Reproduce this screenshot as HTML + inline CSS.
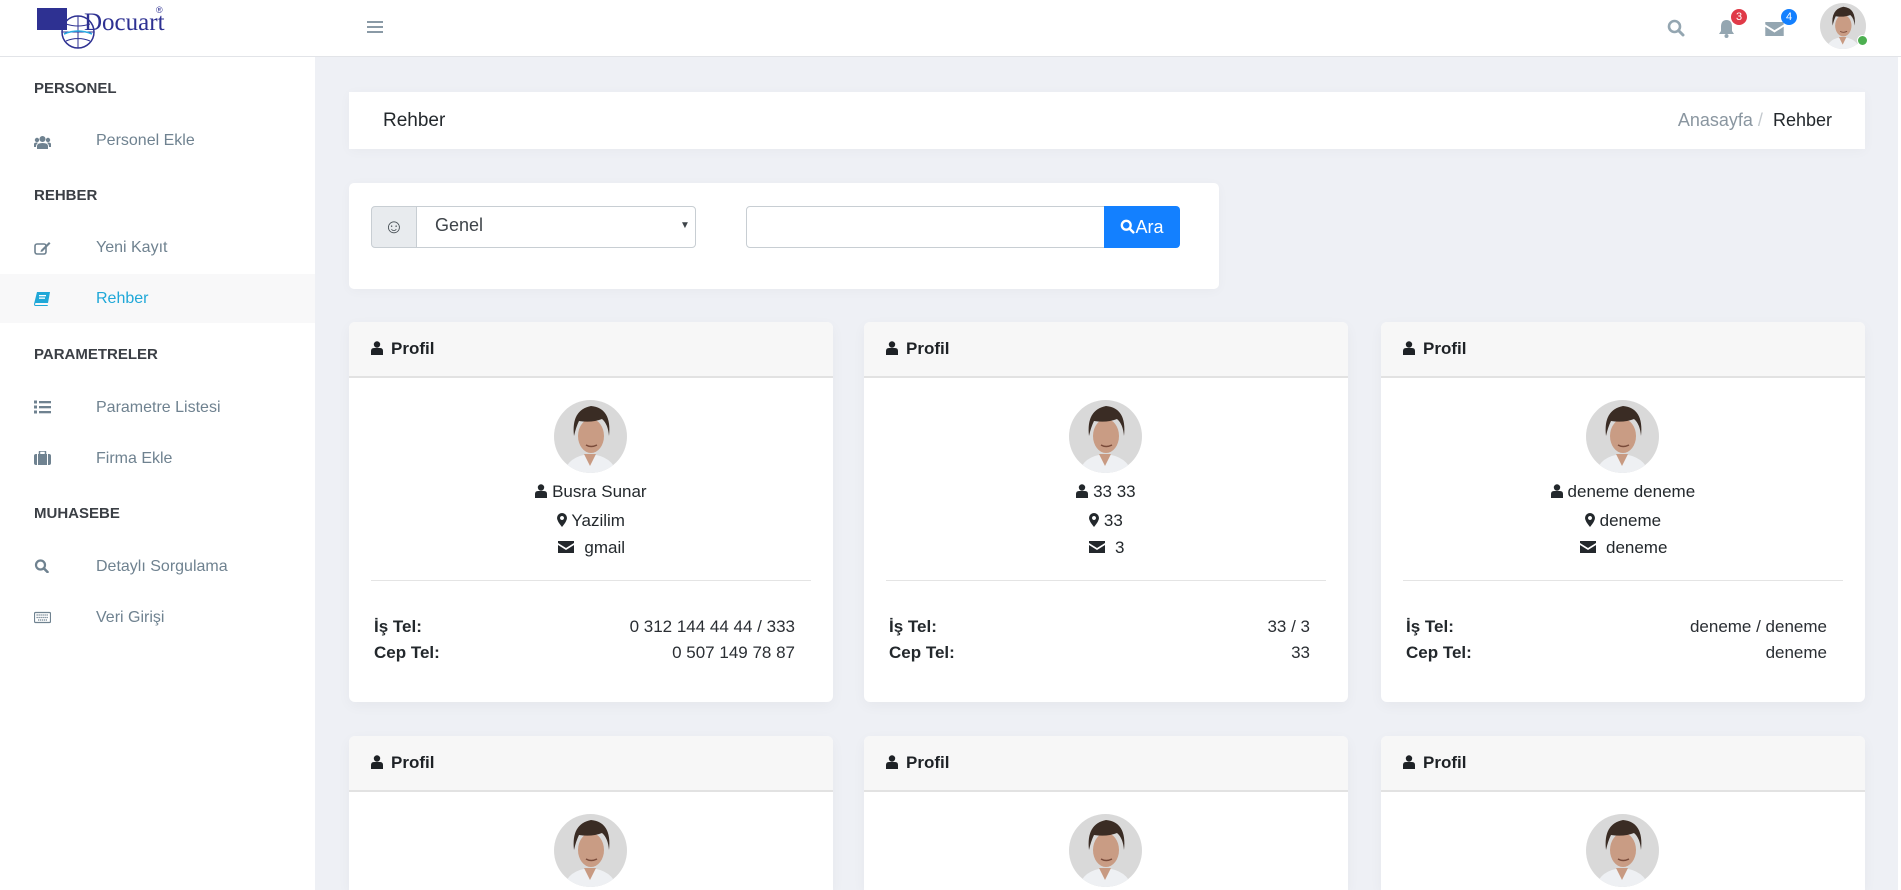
<!DOCTYPE html>
<html style="overflow:hidden;width:1901px;height:890px"><head><meta charset="utf-8">
<style>
*{box-sizing:border-box;margin:0;padding:0}
html,body{overflow:hidden}
body{width:1901px;height:890px;background:#eef0f5;font-family:"Liberation Sans",sans-serif;position:relative;color:#23282c}
.abs{position:absolute}
#hdr{left:0;top:0;width:1901px;height:57px;background:#fff;border-bottom:1px solid #e2e4e8}
#side{left:0;top:57px;width:315px;height:833px;background:#fff}
.sh{position:absolute;left:34px;font-weight:bold;font-size:15px;color:#3b3f45}
.si{position:absolute;left:96px;font-size:16px;color:#6f8290}
.ic{position:absolute;left:34px;width:17px;height:14px}
.box{position:absolute;background:#fff;border-radius:5px;box-shadow:0 2px 12px rgba(0,0,0,.03)}
.card{position:absolute;background:#fff;border-radius:6px 6px 0 0;overflow:hidden;width:484px;box-shadow:0 4px 14px rgba(0,0,0,.04)}
.r1{border-radius:6px}
.ch{height:56px;background:#f7f7f7;border-bottom:2px solid #e2e2e2;padding-left:22px;font-weight:bold;font-size:17px;line-height:54px;color:#1e2226}
.av{position:absolute;width:73px;height:73px;border-radius:50%;overflow:hidden;left:205px}
.ln{position:absolute;left:0;width:100%;text-align:center;font-size:17px;color:#23282c}
.dv{position:absolute;left:22px;right:22px;height:1px;background:#e4e4e4}
.tl{position:absolute;left:25px;font-weight:bold;font-size:17px}
.tv{position:absolute;right:38px;font-size:17px;color:#2a2e33}
</style></head><body>
<svg width="0" height="0" style="position:absolute"><defs>
<symbol id="face" viewBox="0 0 73 73">
<rect width="73" height="73" fill="#d9d9d9"/>
<path d="M10 73 Q14 56 36 54 Q58 56 63 73Z" fill="#eef0f3"/>
<path d="M30 54 L36 66 L42 54Z" fill="#c89a82"/>
<ellipse cx="37" cy="36" rx="13" ry="17" fill="#c99c84"/>
<path d="M20 36 Q17 10 37 6 Q58 8 55 36 Q54 24 48 19 Q38 23 25 21 Q22 27 20 36Z" fill="#3a2c24"/>
<path d="M32 45 Q37 48 43 45" stroke="#7a4b3a" stroke-width="1.5" fill="none"/>
</symbol>
<symbol id="user" viewBox="0 0 12 14"><circle cx="6" cy="3.5" r="3.2" fill="currentColor"/><path d="M0 14 V10 Q0 7 3 7 H9 Q12 7 12 10 V14Z" fill="currentColor"/></symbol>
<symbol id="pin" viewBox="0 0 10 14"><path d="M5 0 A5 5 0 0 1 10 5 Q10 8 5 14 Q0 8 0 5 A5 5 0 0 1 5 0Z M5 3 A2 2 0 1 0 5.01 3Z" fill="currentColor" fill-rule="evenodd"/></symbol>
<symbol id="mail" viewBox="0 0 16 12"><path d="M0 0 H16 V2 L8 7 L0 2Z M0 4 L8 9 L16 4 V12 H0Z" fill="currentColor"/></symbol>
</defs></svg>

<div id="hdr" class="abs">
  <div class="abs" style="left:37px;top:8px;width:30px;height:22px;background:#2e3192"></div>
  <svg class="abs" style="left:58px;top:14px" width="38" height="36" viewBox="0 0 38 36"><circle cx="20" cy="18" r="16" fill="none" stroke="#2e3192" stroke-width="1.5"/><path d="M4 18 H36 M20 2 V34 M8 10 Q20 14 32 10 M8 27 Q20 22 32 27" stroke="#2e3192" stroke-width="1" fill="none"/><path d="M6 20 Q20 14 34 20" stroke="#29abe2" stroke-width="1.5" fill="none"/></svg>
  <div class="abs" style="left:84px;top:9px;font-family:'Liberation Serif',serif;font-size:25px;color:#2e3192">Docuart</div>
  <div class="abs" style="left:156px;top:5px;font-size:9px;color:#2e3192">®</div>
  <div class="abs" style="left:367px;top:21px;width:16px;height:2px;background:#8a9aa6;box-shadow:0 5px 0 #8a9aa6,0 10px 0 #8a9aa6"></div>
  <svg class="abs" style="left:1667px;top:19px" width="18" height="18" viewBox="0 0 18 18"><circle cx="7.5" cy="7.5" r="5.5" fill="none" stroke="#94a6b1" stroke-width="2.6"/><path d="M11.5 11.5 L16 16" stroke="#94a6b1" stroke-width="3" stroke-linecap="round"/></svg>
  <svg class="abs" style="left:1718px;top:19px" width="17" height="19" viewBox="0 0 17 19"><path d="M8.5 1 Q3 1 3 8 V12 L1 15 H16 L14 12 V8 Q14 1 8.5 1Z" fill="#94a6b1"/><circle cx="8.5" cy="17" r="2" fill="#94a6b1"/></svg>
  <div class="abs" style="left:1731px;top:9px;width:16px;height:16px;border-radius:50%;background:#e03a48;color:#fff;font-size:11px;text-align:center;line-height:16px">3</div>
  <svg class="abs" style="left:1765px;top:22px" width="19" height="14" viewBox="0 0 16 12"><use href="#mail" style="color:#94a6b1"/></svg>
  <div class="abs" style="left:1781px;top:9px;width:16px;height:16px;border-radius:50%;background:#1380ff;color:#fff;font-size:11px;text-align:center;line-height:16px">4</div>
  <svg class="abs" style="left:1820px;top:3px;border-radius:50%" width="46" height="46"><use href="#face" width="46" height="46"/></svg>
  <div class="abs" style="left:1857px;top:35px;width:11px;height:11px;border-radius:50%;background:#4caf50;border:1.5px solid #fff"></div>
</div>

<div id="side" class="abs"></div>
<div class="abs" style="left:0;top:274px;width:315px;height:49px;background:#f8f8f9"></div>
<div class="sh" style="top:80px">PERSONEL</div>
<svg class="ic" style="top:135px" viewBox="0 0 17 14"><circle cx="8.5" cy="4" r="3" fill="#6f8290"/><circle cx="3" cy="5" r="2.2" fill="#6f8290"/><circle cx="14" cy="5" r="2.2" fill="#6f8290"/><path d="M3 14 V11 Q3 8 8.5 8 Q14 8 14 11 V14Z M0 12 V9 Q0 7.5 3 7.5 L4 8 Q2 9 2 12Z M17 12 V9 Q17 7.5 14 7.5 L13 8 Q15 9 15 12Z" fill="#6f8290"/></svg>
<div class="si" style="top:132px">Personel Ekle</div>
<div class="sh" style="top:187px">REHBER</div>
<svg class="ic" style="top:241px" viewBox="0 0 17 14"><rect x="1" y="3" width="11" height="10" rx="2" fill="none" stroke="#6f8290" stroke-width="1.6"/><path d="M7 9 L15 1 L16.5 2.5 L8.5 10.5 L6.5 11Z" fill="#6f8290"/></svg>
<div class="si" style="top:239px">Yeni Kayıt</div>
<svg class="ic" style="top:292px" viewBox="0 0 17 14"><path d="M3 0 H16 L14 11 H2 Q1 11 1 12.5 Q1 13 2 13 H14 L13.5 14 H1.5 Q0 14 0 12 Z" fill="#20a8d8"/><rect x="5" y="3" width="7" height="1.3" fill="#fff"/><rect x="5" y="5.5" width="6" height="1.3" fill="#fff"/></svg>
<div class="si" style="top:290px;color:#20a8d8">Rehber</div>
<div class="sh" style="top:346px">PARAMETRELER</div>
<svg class="ic" style="top:400px" viewBox="0 0 17 14"><rect x="5" y="1" width="12" height="2.3" fill="#6f8290"/><rect x="5" y="6" width="12" height="2.3" fill="#6f8290"/><rect x="5" y="11" width="12" height="2.3" fill="#6f8290"/><rect x="0" y="0.5" width="3" height="3" fill="#6f8290"/><rect x="0" y="5.5" width="3" height="3" fill="#6f8290"/><rect x="0" y="10.5" width="3" height="3" fill="#6f8290"/></svg>
<div class="si" style="top:399px">Parametre Listesi</div>
<svg class="ic" style="top:451px" viewBox="0 0 17 14"><rect x="0" y="3" width="17" height="11" rx="2" fill="#6f8290"/><rect x="5.5" y="0" width="6" height="4" rx="1" fill="none" stroke="#6f8290" stroke-width="1.5"/><rect x="3" y="3" width="1" height="11" fill="#fff"/><rect x="13" y="3" width="1" height="11" fill="#fff"/></svg>
<div class="si" style="top:450px">Firma Ekle</div>
<div class="sh" style="top:505px">MUHASEBE</div>
<svg class="ic" style="top:559px" viewBox="0 0 17 14"><circle cx="6.5" cy="6" r="4.5" fill="none" stroke="#6f8290" stroke-width="2.2"/><path d="M10 9.5 L13.5 13" stroke="#6f8290" stroke-width="2.6" stroke-linecap="round"/></svg>
<div class="si" style="top:558px">Detaylı Sorgulama</div>
<svg class="ic" style="top:610px" viewBox="0 0 17 14"><rect x="0.5" y="2.5" width="16" height="10" rx="1" fill="none" stroke="#6f8290" stroke-width="1.2"/><path d="M2.5 5 H14.5 M2.5 7.5 H14.5 M4 10 H13" stroke="#6f8290" stroke-width="1.2" stroke-dasharray="1.3 0.7"/></svg>
<div class="si" style="top:609px">Veri Girişi</div>

<div class="box" style="left:349px;top:92px;width:1516px;height:57px;border-radius:0"></div>
<div class="abs" style="left:383px;top:110px;font-size:19px;color:#23282c">Rehber</div>
<div class="abs" style="right:69px;top:110px;font-size:18px;color:#8a96a0">Anasayfa <span style="color:#c3c9ce">/</span>&nbsp; <span style="color:#23282c">Rehber</span></div>

<div class="box" style="left:349px;top:183px;width:870px;height:106px"></div>
<div class="abs" style="left:371px;top:206px;width:46px;height:42px;background:#e8ebee;border:1px solid #c8ced3;border-radius:4px 0 0 4px;text-align:center;line-height:40px;font-size:20px;color:#4a5258">☺</div>
<div class="abs" style="left:416px;top:206px;width:280px;height:42px;border:1px solid #c8ced3;border-radius:0 4px 4px 0;background:#fff"></div>
<div class="abs" style="left:435px;top:215px;font-size:18px;color:#3e4449">Genel</div>
<div class="abs" style="left:680px;top:220px;font-size:10px;color:#3e4449">▼</div>
<div class="abs" style="left:746px;top:206px;width:360px;height:42px;border:1px solid #c8ced3;border-radius:4px 0 0 4px;background:#fff"></div>
<div class="abs" style="left:1104px;top:206px;width:76px;height:42px;background:#1380ff;border-radius:0 4px 4px 0;color:#fff;font-size:18px;line-height:42px;text-align:center">
<svg width="15" height="15" viewBox="0 0 18 18" style="vertical-align:-1px"><circle cx="7.5" cy="7.5" r="5.3" fill="none" stroke="#fff" stroke-width="2.8"/><path d="M11.5 11.5 L16 16" stroke="#fff" stroke-width="3" stroke-linecap="round"/></svg>Ara</div>

<div class="card r1" style="left:349px;top:322px;height:380px">
 <div class="ch"><svg width="12" height="14" style="vertical-align:-1px;margin-right:8px;color:#1e2226"><use href="#user"/></svg>Profil</div>
 <svg class="av" style="top:78px" viewBox="0 0 73 73"><use href="#face"/></svg>
 <div class="ln" style="top:160px"><svg width="12" height="14" style="vertical-align:-1px;color:#23282c"><use href="#user"/></svg> Busra Sunar</div>
 <div class="ln" style="top:189px"><svg width="10" height="14" style="vertical-align:-1px;color:#23282c"><use href="#pin"/></svg> Yazilim</div>
 <div class="ln" style="top:216px"><svg width="18" height="12" style="vertical-align:0;color:#23282c"><use href="#mail"/></svg>&nbsp; gmail</div>
 <div class="dv" style="top:258px"></div>
 <div class="tl" style="top:295px">İş Tel:</div><div class="tv" style="top:295px">0 312 144 44 44 / 333</div>
 <div class="tl" style="top:321px">Cep Tel:</div><div class="tv" style="top:321px">0 507 149 78 87</div>
</div>
<div class="card r1" style="left:864px;top:322px;height:380px">
 <div class="ch"><svg width="12" height="14" style="vertical-align:-1px;margin-right:8px;color:#1e2226"><use href="#user"/></svg>Profil</div>
 <svg class="av" style="top:78px" viewBox="0 0 73 73"><use href="#face"/></svg>
 <div class="ln" style="top:160px"><svg width="12" height="14" style="vertical-align:-1px;color:#23282c"><use href="#user"/></svg> 33 33</div>
 <div class="ln" style="top:189px"><svg width="10" height="14" style="vertical-align:-1px;color:#23282c"><use href="#pin"/></svg> 33</div>
 <div class="ln" style="top:216px"><svg width="18" height="12" style="vertical-align:0;color:#23282c"><use href="#mail"/></svg>&nbsp; 3</div>
 <div class="dv" style="top:258px"></div>
 <div class="tl" style="top:295px">İş Tel:</div><div class="tv" style="top:295px">33 / 3</div>
 <div class="tl" style="top:321px">Cep Tel:</div><div class="tv" style="top:321px">33</div>
</div>
<div class="card r1" style="left:1381px;top:322px;height:380px">
 <div class="ch"><svg width="12" height="14" style="vertical-align:-1px;margin-right:8px;color:#1e2226"><use href="#user"/></svg>Profil</div>
 <svg class="av" style="top:78px" viewBox="0 0 73 73"><use href="#face"/></svg>
 <div class="ln" style="top:160px"><svg width="12" height="14" style="vertical-align:-1px;color:#23282c"><use href="#user"/></svg> deneme deneme</div>
 <div class="ln" style="top:189px"><svg width="10" height="14" style="vertical-align:-1px;color:#23282c"><use href="#pin"/></svg> deneme</div>
 <div class="ln" style="top:216px"><svg width="18" height="12" style="vertical-align:0;color:#23282c"><use href="#mail"/></svg>&nbsp; deneme</div>
 <div class="dv" style="top:258px"></div>
 <div class="tl" style="top:295px">İş Tel:</div><div class="tv" style="top:295px">deneme / deneme</div>
 <div class="tl" style="top:321px">Cep Tel:</div><div class="tv" style="top:321px">deneme</div>
</div>

<div class="card" style="left:349px;top:736px;height:154px">
 <div class="ch"><svg width="12" height="14" style="vertical-align:-1px;margin-right:8px;color:#1e2226"><use href="#user"/></svg>Profil</div>
 <svg class="av" style="top:78px" viewBox="0 0 73 73"><use href="#face"/></svg>
</div>
<div class="card" style="left:864px;top:736px;height:154px">
 <div class="ch"><svg width="12" height="14" style="vertical-align:-1px;margin-right:8px;color:#1e2226"><use href="#user"/></svg>Profil</div>
 <svg class="av" style="top:78px" viewBox="0 0 73 73"><use href="#face"/></svg>
</div>
<div class="card" style="left:1381px;top:736px;height:154px">
 <div class="ch"><svg width="12" height="14" style="vertical-align:-1px;margin-right:8px;color:#1e2226"><use href="#user"/></svg>Profil</div>
 <svg class="av" style="top:78px" viewBox="0 0 73 73"><use href="#face"/></svg>
</div>
<div class="abs" style="left:1898px;top:57px;width:3px;height:833px;background:#fff"></div>
</body></html>
